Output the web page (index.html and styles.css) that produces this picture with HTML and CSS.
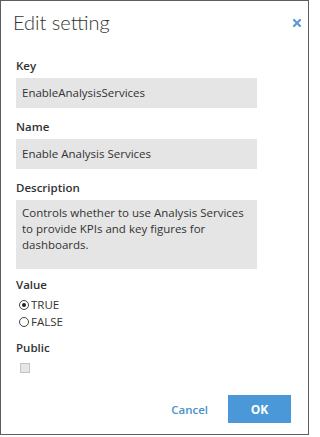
FILE: index.html
```html
<!DOCTYPE html>
<html>
<head>
<meta charset="utf-8">
<link rel="stylesheet" href="styles.css">
</head>
<body>
<div class="dialog">
  <div class="header">
    <h1 class="title">Edit setting</h1>
    <button class="close" aria-label="Close">
      <svg width="8" height="8" viewBox="0 0 8 8"><path d="M1 1L7 7M7 1L1 7" stroke="#5b9bd5" stroke-width="2.2" stroke-linecap="square"/></svg>
    </button>
  </div>
  <div class="field">
    <div class="label">Key</div>
    <div class="input">EnableAnalysisServices</div>
  </div>
  <div class="field">
    <div class="label">Name</div>
    <div class="input">Enable Analysis Services</div>
  </div>
  <div class="field field-desc">
    <div class="label">Description</div>
    <div class="textarea">Controls whether to use Analysis Services to provide KPIs and key figures for dashboards.</div>
  </div>
  <div class="field field-value">
    <div class="label">Value</div>
    <div class="radios">
      <div class="radio-row"><span class="radio checked"></span><span>TRUE</span></div>
      <div class="radio-row"><span class="radio"></span><span>FALSE</span></div>
    </div>
  </div>
  <div class="field field-public">
    <div class="label">Public</div>
    <span class="checkbox"></span>
  </div>
  <div class="footer">
    <button class="btn-cancel">Cancel</button>
    <button class="btn-ok">OK</button>
  </div>
</div>
</body>
</html>
```
FILE: styles.css
```css
html, body {
  margin: 0;
  padding: 0;
  background: #ffffff;
}
body {
  font-family: "Open Sans", "Liberation Sans", sans-serif;
  color: #333333;
}
.dialog {
  box-sizing: border-box;
  width: 309px;
  height: 435px;
  border: 1px solid #5e5e5e;
  background: #ffffff;
  padding: 9px 17px 11px 15px;
  display: flex;
  flex-direction: column;
}
.header {
  display: flex;
  align-items: center;
  justify-content: space-between;
  height: 24px;
  margin-bottom: 24px;
}
.title {
  margin: 0 0 0 -3px;
  font-family: "Lato", "Open Sans", sans-serif;
  font-weight: 300;
  font-size: 20px;
  line-height: 24px;
  color: #333333;
}
.close {
  border: 0;
  background: none;
  padding: 0;
  margin: 2px -10px 0 0;
  width: 8px;
  height: 8px;
  display: flex;
  cursor: pointer;
}
.field {
  display: flex;
  flex-direction: column;
  margin-bottom: 11px;
}
.label {
  font-weight: 600;
  font-size: 11.5px;
  line-height: 16px;
  margin-bottom: 4px;
  color: #333333;
}
.input, .textarea {
  box-sizing: border-box;
  width: 241px;
  background: #e5e5e5;
  font-size: 11.5px;
  color: #333333;
  padding: 0 6px;
}
.input {
  height: 30px;
  line-height: 30px;
}
.textarea {
  height: 69px;
  padding-top: 5px;
  line-height: 16px;
}
.field-desc {
  margin-bottom: 8px;
}
.field-value .label {
  margin-bottom: 3px;
}
.field-value {
  margin-bottom: 10px;
}
.radios {
  display: flex;
  flex-direction: column;
}
.radio-row {
  display: flex;
  align-items: center;
  gap: 2px;
  height: 17px;
  font-size: 11.5px;
  padding-left: 3px;
}
.radio {
  box-sizing: border-box;
  width: 10px;
  height: 10px;
  border: 1px solid #444444;
  border-radius: 50%;
  display: flex;
  align-items: center;
  justify-content: center;
}
.radio.checked::after {
  content: "";
  width: 4px;
  height: 4px;
  border-radius: 50%;
  background: #222222;
}
.field-public .label {
  margin-bottom: 7px;
}
.checkbox {
  box-sizing: border-box;
  display: block;
  width: 10px;
  height: 10px;
  margin-left: 4px;
  background: #e6e6e6;
  border: 1px solid #c4c4c4;
}
.footer {
  margin-top: auto;
  display: flex;
  justify-content: flex-end;
  align-items: center;
  gap: 20px;
}
.btn-cancel {
  border: 0;
  background: none;
  padding: 0;
  font-family: "Open Sans", sans-serif;
  font-weight: 600;
  font-size: 11.5px;
  color: #4a90cc;
  cursor: pointer;
}
.btn-ok {
  border: 0;
  width: 63px;
  height: 28px;
  background: #4a98d8;
  color: #ffffff;
  font-family: "Open Sans", sans-serif;
  font-weight: 700;
  font-size: 12px;
  cursor: pointer;
}
```
